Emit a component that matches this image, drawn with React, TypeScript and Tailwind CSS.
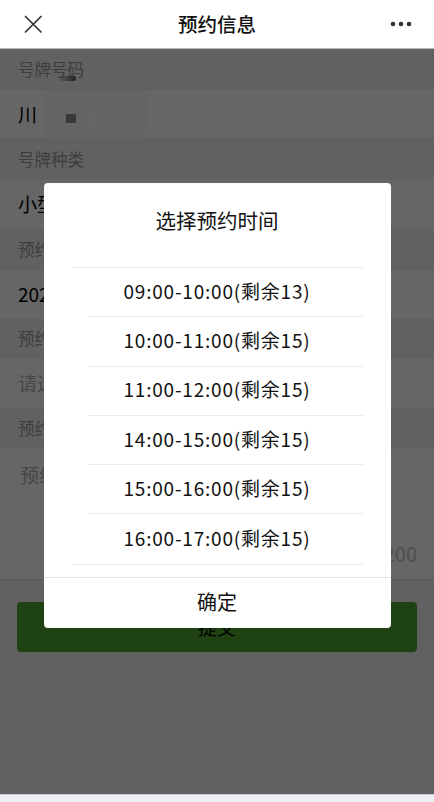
import React from "react";

const slots = [
  "09:00-10:00(剩余13)",
  "10:00-11:00(剩余15)",
  "11:00-12:00(剩余15)",
  "14:00-15:00(剩余15)",
  "15:00-16:00(剩余15)",
  "16:00-17:00(剩余15)",
];

function Label({ text, h }: { text: string; h: string }) {
  return (
    <div className={`${h} flex items-center px-[18px] text-[16.5px] text-[#9a9a9a]`}>
      {text}
    </div>
  );
}

function App() {
  return (
    <div
      className="w-[434px] h-[802px] overflow-hidden flex flex-col bg-[#efeff4] text-black"
      style={{ fontFamily: '"Noto Sans CJK SC", "Liberation Sans", sans-serif' }}
    >
      {/* nav bar */}
      <header className="h-[49px] shrink-0 bg-white border-b border-[#b9b9b9] flex items-center justify-between px-[22px]">
        <svg width="22" height="22" viewBox="0 0 22 22" fill="none">
          <path d="M3 3L19.5 19.5M19.5 3L3 19.5" stroke="#333" strokeWidth="1.7" />
        </svg>
        <div className="text-[19.5px] font-medium text-[#111]">预约信息</div>
        <svg width="22" height="8" viewBox="0 0 22 8">
          <circle cx="3" cy="4" r="2.3" fill="#333" />
          <circle cx="11" cy="4" r="2.3" fill="#333" />
          <circle cx="19" cy="4" r="2.3" fill="#333" />
        </svg>
      </header>

      {/* page under the mask */}
      <main className="relative h-[745px] shrink-0 bg-[#f3f3f3]">
        <Label text="号牌号码" h="h-[41px]" />
        <div className="h-[48px] bg-white flex items-center pl-[18px] text-[19px] relative">
          <span>川</span>
          <div className="ml-[6px] h-[48px] w-[104px] bg-[#fbfbfb] rounded-[6px] flex items-center gap-[11px] pl-[23px] pt-[8px]">
            <span className="w-[10px] h-[9px] bg-[#8f8f8f]"></span>
            <span className="w-[10px] h-[9px] bg-[#ffffff]"></span>
          </div>
          <span className="absolute left-[58px] top-[-14px] w-[18px] h-[5px] bg-gradient-to-r from-transparent to-[#555] rounded-sm"></span>
        </div>
        <Label text="号牌种类" h="h-[42px]" />
        <div className="h-[48px] bg-white flex items-center px-[18px] text-[19px]">小型汽车</div>
        <Label text="预约日期" h="h-[42px]" />
        <div className="h-[48px] bg-white flex items-center px-[18px] text-[19px]">2021-06-18</div>
        <Label text="预约时间" h="h-[40px]" />
        <div className="h-[50px] bg-white flex items-center px-[18px] text-[19px] text-[#b0b0b0]">
          请选择预约时间
        </div>
        <Label text="预约事由" h="h-[41px]" />
        <div className="h-[131px] bg-white border-b border-[#e2e2e2] flex flex-col justify-between px-[20px] pt-[12px] pb-[10px]">
          <div className="text-[19px] text-[#b0b0b0]">预约事由</div>
          <div className="self-end text-[20px] text-[#c4c4c4] mr-[-3px]">0/200</div>
        </div>
        <div className="px-[17px] pt-[22px]">
          <div className="h-[50px] rounded-[4px] bg-[#4fa52e] flex items-center justify-center text-[19px] text-black">
            提交
          </div>
        </div>

        {/* mask + dialog */}
        <div className="absolute inset-0 bg-black/60 flex justify-center pt-[134px]">
          <div className="w-[347px] h-[445px] bg-white rounded-[4px] flex flex-col">
            <div className="h-[84px] flex items-start justify-center pt-[22px] text-[20.5px] text-[#111]">
              选择预约时间
            </div>
            <div className="mx-[28px] border-y border-[#ebebeb]">
              {slots.map((s, i) => (
                <div
                  key={s}
                  className={`h-[49.3px] flex items-center justify-center text-[19px] tracking-[0.8px] text-[#111] ${
                    i < slots.length - 1 ? "ml-[16px] border-b border-[#ebebeb]" : ""
                  }`}
                >
                  <span className={i < slots.length - 1 ? "-ml-[16px] -mt-[2px]" : "-mt-[2px]"}>{s}</span>
                </div>
              ))}
            </div>
            <div className="mt-[12px] border-t border-[#e3e3e3] flex-1 flex items-center justify-center text-[20px] text-[#111] pb-[2px]">
              确定
            </div>
          </div>
        </div>
      </main>

      {/* bottom toolbar strip */}
      <div className="flex-1 bg-[#efeff4] border-t border-[#cfcfcf]"></div>
    </div>
  );
}

export default App;
